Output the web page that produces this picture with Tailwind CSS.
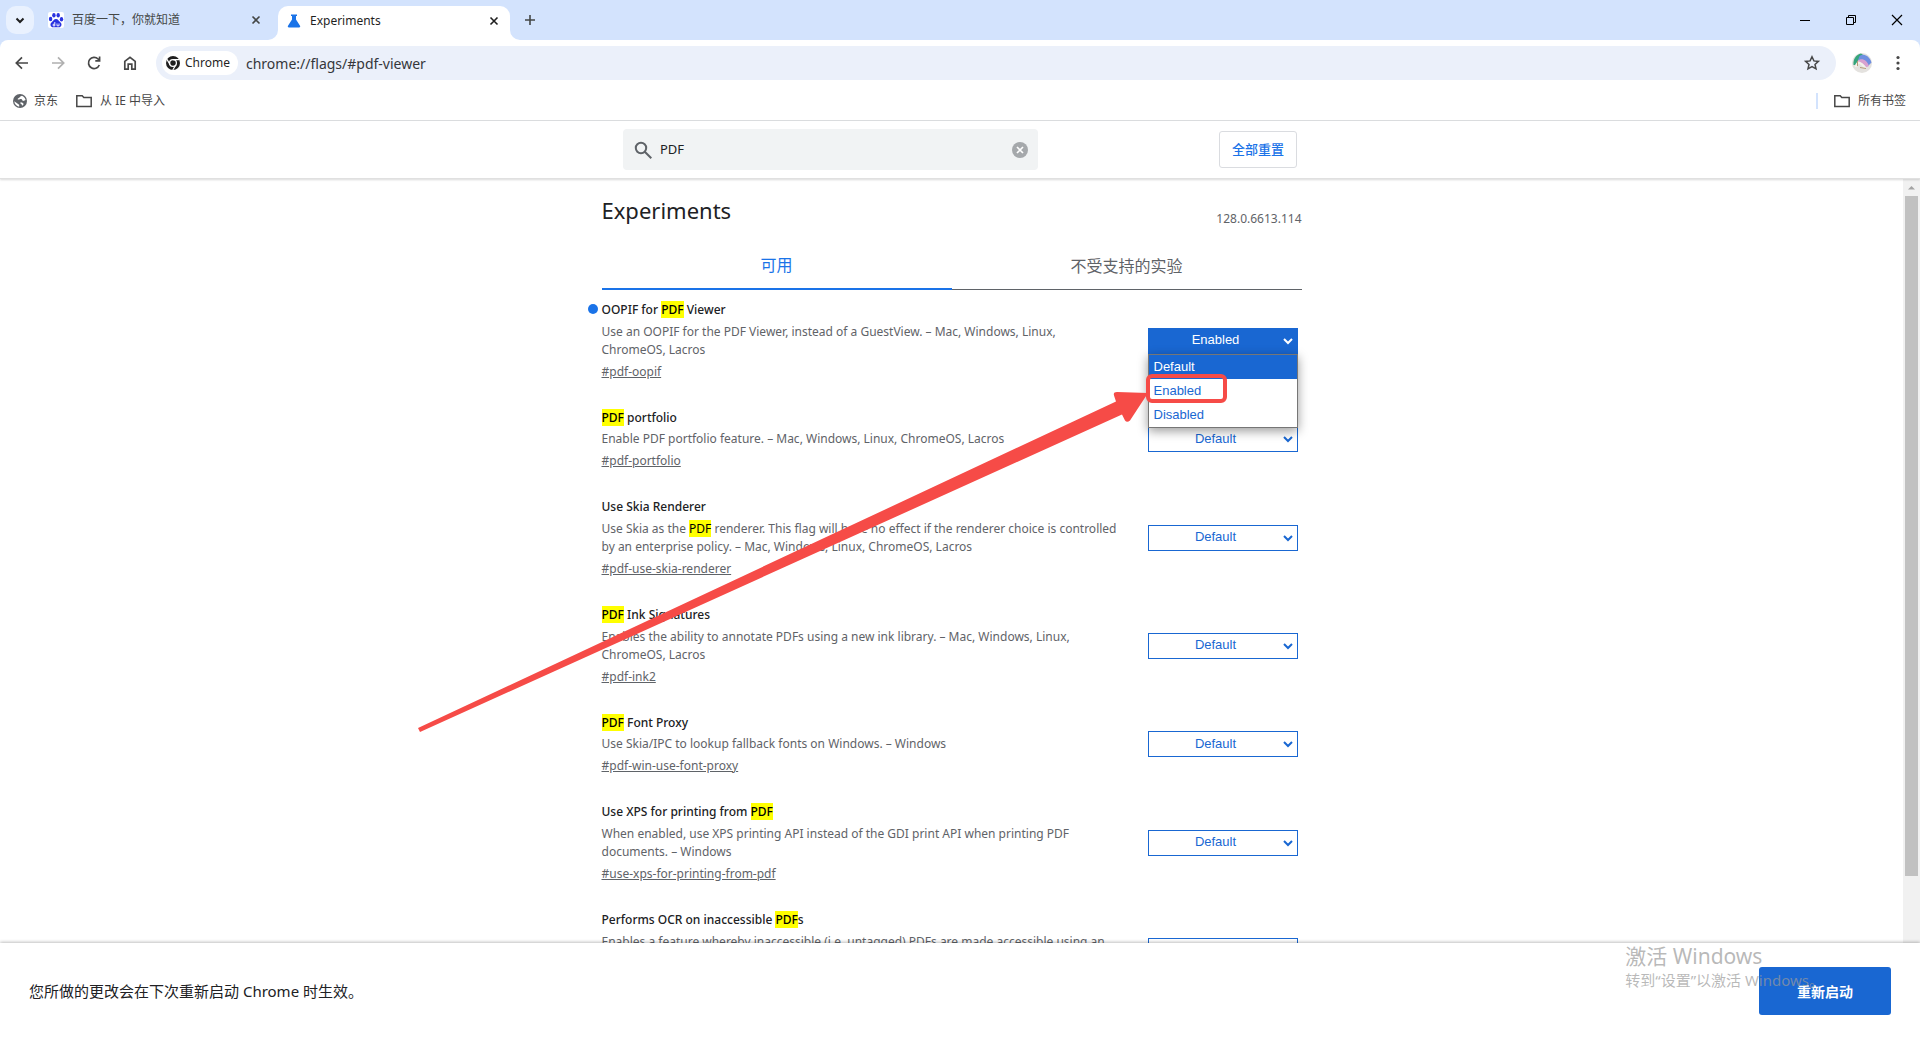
<!DOCTYPE html>
<html lang="zh-CN">
<head>
<meta charset="utf-8">
<title>Experiments</title>
<script src="https://cdn.jsdelivr.net/npm/@tailwindcss/browser@4"></script>
</head>
<body class="flex h-screen flex-col overflow-hidden bg-white font-['Noto_Sans','Noto_Sans_CJK_SC',sans-serif] text-[12px] text-[#202124]">
<!-- tab strip -->
<header class="shrink-0 border-b border-[#dcdee0] bg-[#d3e3fd]">
  <div class="flex h-10 items-center">
    <button aria-label="搜索标签页" class="ml-1.5 flex size-7 items-center justify-center rounded-[10px] bg-[#e9f1fe]">
      <svg class="size-4" viewBox="0 0 16 16" fill="none" stroke="#1f1f1f" stroke-width="2"><path d="M4.500 6.500 8 10l3.500-3.500"/></svg>
    </button>
    <div class="ml-3.5 flex w-[230px] items-center">
      <svg class="size-4 shrink-0" viewBox="0 0 16 16"><rect width="16" height="16" rx="2" fill="#fff"/><g fill="#2932e1"><ellipse cx="2.600" cy="7" rx="1.700" ry="2.200"/><ellipse cx="5.900" cy="3.200" rx="1.700" ry="2.300"/><ellipse cx="10.200" cy="3.200" rx="1.700" ry="2.300"/><ellipse cx="13.500" cy="7.200" rx="1.700" ry="2.200"/><path d="M8 7c2.200 0 2.800 2 4.300 3.300 2.400 2 .9 5.200-1.700 5-1.700-.1-3.500-.1-5.200 0-2.600.2-4.100-3-1.700-5C5.200 9 5.800 7 8 7Z"/></g><path d="M6.800 10v4M6.800 12.200H5.200v1.700h1.600M9 11.500v2.300h2v-2.300" fill="none" stroke="#fff" stroke-width=".9"/></svg>
      <span class="ml-2 flex-1 text-[#444746]">百度一下，你就知道</span>
      <button aria-label="关闭" class="mr-3.5 size-4"><svg viewBox="0 0 16 16" fill="none" stroke="#444746" stroke-width="1.600"><path d="m4.500 4.500 7 7m0-7-7 7"/></svg></button>
    </div>
    <div class="relative flex h-[34px] w-[232px] items-center self-end rounded-t-[10px] bg-white pb-1">
      <svg class="absolute bottom-0 -left-2.5 size-2.5" viewBox="0 0 10 10"><path d="M10 0v10H0A10 10 0 0 0 10 0Z" fill="#fff"/></svg>
      <svg class="absolute -right-2.5 bottom-0 size-2.5" viewBox="0 0 10 10"><path d="M0 0v10h10A10 10 0 0 1 0 0Z" fill="#fff"/></svg>
      <svg class="ml-2 size-4" viewBox="0 0 16 16"><path d="M5 1.500h6V3h-1v3.500l4 6.300c.6 1-.1 1.700-.9 1.700H2.900c-.8 0-1.500-.7-.9-1.700l4-6.300V3H5Z" fill="#1a73e8"/></svg>
      <span class="ml-2 flex-1 text-[#1f1f1f]">Experiments</span>
      <button aria-label="关闭" class="mr-2 size-4"><svg viewBox="0 0 16 16" fill="none" stroke="#1f1f1f" stroke-width="1.600"><path d="m4.500 4.500 7 7m0-7-7 7"/></svg></button>
    </div>
    <button aria-label="打开新的标签页" class="ml-3 size-4"><svg viewBox="0 0 16 16" fill="none" stroke="#444746" stroke-width="1.600"><path d="M8 3v10M3 8h10"/></svg></button>
    <div class="ml-auto flex items-center gap-[30px] pr-[15px]">
      <button aria-label="最小化" class="size-4"><svg viewBox="0 0 16 16" fill="none" stroke="#000"><path d="M3 8.500h10"/></svg></button>
      <button aria-label="向下还原" class="size-4"><svg viewBox="0 0 16 16" fill="none" stroke="#000"><path d="M3.500 5.500h7v7h-7zM5.500 5.500v-2h7v7h-2"/></svg></button>
      <button aria-label="关闭窗口" class="size-4"><svg viewBox="0 0 16 16" fill="none" stroke="#000" stroke-width="1.200"><path d="m3 3 10 10M13 3 3 13"/></svg></button>
    </div>
  </div>
  <div class="rounded-t-lg bg-white">
    <!-- toolbar -->
    <div class="flex h-[46px] items-center pl-3">
      <div class="flex gap-4 text-[#474747]">
        <button aria-label="返回" class="size-5"><svg viewBox="0 0 20 20" fill="none" stroke="currentColor" stroke-width="1.700"><path d="M16 10H4.500M10 4.300 4.300 10l5.700 5.700"/></svg></button>
        <button aria-label="前进" class="size-5 text-[#b0b0b0]"><svg viewBox="0 0 20 20" fill="none" stroke="currentColor" stroke-width="1.700"><path d="M4 10h11.500M10 4.300l5.700 5.700-5.700 5.700"/></svg></button>
        <button aria-label="重新加载" class="size-5"><svg viewBox="0 0 20 20" fill="none" stroke="currentColor" stroke-width="1.700"><path d="M15.300 12a5.600 5.600 0 1 1-1.200-6L15.500 7.500M15.600 3.500v4.300h-4.300"/></svg></button>
        <button aria-label="主页" class="size-5"><svg viewBox="0 0 20 20" fill="none" stroke="currentColor" stroke-width="1.700"><path d="M4.800 16.200V8.300L10 4.300l5.200 4v7.900h-3.400v-5H8.200v5Z"/></svg></button>
      </div>
      <div class="ml-4 flex h-[34px] flex-1 items-center rounded-full bg-[#ebf0fa] px-1.5">
        <button class="flex h-6 items-center gap-1 rounded-full bg-white pr-2 pl-[3px]">
          <svg class="size-4" viewBox="0 0 16 16"><circle cx="8" cy="8" r="7" fill="#1f1f1f"/><circle cx="8" cy="8" r="3.400" fill="#1f1f1f" stroke="#fff" stroke-width="1.300"/><path d="M8 4.600h6.200M5.100 9.700 2 4.400M10.900 9.700 7.800 15" stroke="#fff" stroke-width="1.200"/></svg>
          <span class="text-[#1f1f1f]">Chrome</span>
        </button>
        <input aria-label="地址" value="chrome://flags/#pdf-viewer" class="ml-2 min-w-0 flex-1 bg-transparent text-[14px] text-[#35373a] outline-none">
        <button aria-label="收藏" class="mr-2 size-5"><svg viewBox="0 0 20 20" fill="none" stroke="#474747" stroke-width="1.500"><path d="m10 3.800 1.900 4.100 4.500.5-3.400 3 1 4.400-4-2.300-4 2.300 1-4.400-3.400-3 4.500-.5Z"/></svg></button>
      </div>
      <button aria-label="个人资料" class="ml-4 size-5"><svg viewBox="0 0 20 20"><circle cx="10" cy="10" r="10" fill="#e4e2df"/><path d="M1.500 12C1 6 4 1.500 9 .5l3 2C8 3.500 6 7 4.500 12Z" fill="#35a57c"/><path d="M7 4.500C8 0 17 1 19.500 9.500L16 13C14 8 11 6 6 7.500Z" fill="#6f8fe0"/><path d="M5.500 8c4-4 9.500-1 11.500 5l-3 1.500C12 10 9 9 6 10Z" fill="#d9a2d0"/><path d="M4 14c0-3 2-5 4-4 2 .8 3.500 3 6 5.500" fill="none" stroke="#f4f1ea" stroke-width="2.200"/><path d="M5.500 8v5M8 14.500l6 1" stroke="#b59c79" fill="none"/></svg></button>
      <button aria-label="菜单" class="mr-3 ml-4 size-5"><svg viewBox="0 0 20 20" fill="#474747"><circle cx="10" cy="4.500" r="1.600"/><circle cx="10" cy="10" r="1.600"/><circle cx="10" cy="15.500" r="1.600"/></svg></button>
    </div>
    <!-- bookmarks bar -->
    <nav class="flex h-[34px] items-center pb-1 pl-3 text-[#474747]">
      <a href="#" class="flex items-center gap-1.5"><svg class="size-4" viewBox="0 0 16 16"><circle cx="8" cy="8" r="7" fill="#5f6368"/><path d="M7.200 13.700c-2.700-.4-4.800-2.700-4.900-5.400l3.400 2.500c.6.500 1.500.8 1.500 1.500ZM10 2.700c1.800.7 3.300 2.400 3.600 4.300-1 0-1.500 1.200-2.600.8-1.200-.4-.6-1.800-1.900-1.900-1.500 0-2 1-3.200.5-.7-.5.200-1.300.9-1.500C8 4.600 7.700 3.200 10 2.700ZM8.500 9.200c1.500-.2 2.500.8 3.300 1.900l-1.500 1.700c-.9-.6.300-1.500-1.800-2Z" fill="#fff"/></svg>京东</a>
      <a href="#" class="ml-[18px] flex items-center gap-2"><svg class="size-4" viewBox="0 0 16 16" fill="none" stroke="#474747" stroke-width="1.500"><path d="M.8 2.800h5.400l1.600 1.700h7.400v9H.8Z"/></svg>从 IE 中导入</a>
      <div class="mr-3.5 ml-auto flex items-center">
        <span class="h-4 w-0.5 bg-[#d3e3fd]"></span>
        <a href="#" class="ml-4 flex items-center gap-2"><svg class="size-4" viewBox="0 0 16 16" fill="none" stroke="#474747" stroke-width="1.500"><path d="M.8 2.800h5.400l1.600 1.700h7.400v9H.8Z"/></svg>所有书签</a>
      </div>
    </nav>
  </div>
</header>
<!-- search row -->
<div class="z-10 flex h-[58px] shrink-0 items-center justify-center border-b border-[#e0e0e0] bg-white shadow-[0_1px_2px_rgba(0,0,0,0.15)]">
  <div class="flex w-[674px] items-center justify-between">
    <div class="flex h-[41px] w-[415px] items-center rounded-sm bg-[#f1f3f4] px-2.5">
      <svg class="size-5" viewBox="0 0 20 20" fill="none" stroke="#5f6368" stroke-width="2"><circle cx="8" cy="8" r="5.200"/><path d="m11.800 11.800 6.500 6.500"/></svg>
      <input aria-label="搜索标记" value="PDF" class="ml-[7px] min-w-0 flex-1 bg-transparent text-[13px] outline-none">
      <button aria-label="清除搜索" class="size-4"><svg viewBox="0 0 16 16"><circle cx="8" cy="8" r="8" fill="#a5a8ab"/><path d="m5 5 6 6m0-6-6 6" stroke="#fff" stroke-width="1.700"/></svg></button>
    </div>
    <button class="h-[37px] w-[78px] rounded-[3px] border border-[#dadce0] text-[13px] font-medium text-[#1a73e8]">全部重置</button>
  </div>
</div>
<div class="flex min-h-0 flex-1">
  <main class="min-w-0 flex-1 overflow-hidden">
    <div class="relative mx-auto w-[700px]">
      <div class="flex h-[59px] items-end justify-between">
        <h1 class="pb-3 text-[22px] leading-8">Experiments</h1>
        <span class="pb-2.5 leading-[18px] text-[#5f6368]">128.0.6613.114</span>
      </div>
      <div class="flex h-[52px] text-[16px]">
        <button class="flex-1 border-b-2 border-[#1a73e8] pt-1 text-[#1a73e8]">可用</button>
        <button class="flex-1 border-b border-[#5f6368] pt-1 text-[#5f6368]">不受支持的实验</button>
      </div>
      <section class="flex flex-col gap-[27px] pt-2.5">
        <article class="relative flex items-center justify-between">
          <span class="absolute top-1 -left-3.5 size-2.5 rounded-full bg-[#1a73e8]"></span>
          <div class="w-[530px] text-[#5f6368]">
            <h2 class="text-[12px] leading-5 font-medium text-[#202124]">OOPIF for <mark class="bg-[#ff0]">PDF</mark> Viewer</h2>
            <p class="mt-[3px] leading-[18px]">Use an OOPIF for the PDF Viewer, instead of a GuestView. – Mac, Windows, Linux,<br>ChromeOS, Lacros</p>
            <a href="#" class="mt-1 block leading-[18px] underline">#pdf-oopif</a>
          </div>
          <div class="relative mr-1 w-[150px]">
            <select aria-label="OOPIF for PDF Viewer" class="block h-[26px] w-full appearance-none border border-[#1967d2] bg-[#1967d2] pr-3.5 pb-px text-center font-['Liberation_Sans',Arial,sans-serif] text-[13px] text-white"><option>Enabled</option></select>
            <svg class="pointer-events-none absolute top-[7px] right-1 size-3" viewBox="0 0 12 12" fill="none" stroke="#fff" stroke-width="2"><path d="m2 4 4 4 4-4"/></svg>
            <ul role="listbox" class="absolute top-[26px] left-0 z-10 w-[150px] border border-[#767676] bg-white font-['Liberation_Sans',Arial,sans-serif] text-[13px] leading-6 text-[#1967d2] shadow-[0_3px_10px_rgba(0,0,0,0.4)]">
              <li role="option" class="bg-[#1967d2] px-[5px] text-white">Default</li>
              <li role="option" class="px-[5px]">Enabled</li>
              <li role="option" class="px-[5px]">Disabled</li>
            </ul>
          </div>
        </article>
        <article class="flex items-center justify-between">
          <div class="w-[530px] text-[#5f6368]">
            <h2 class="text-[12px] leading-5 font-medium text-[#202124]"><mark class="bg-[#ff0]">PDF</mark> portfolio</h2>
            <p class="mt-0.5 leading-[18px]">Enable PDF portfolio feature. – Mac, Windows, Linux, ChromeOS, Lacros</p>
            <a href="#" class="mt-1 block leading-[18px] underline">#pdf-portfolio</a>
          </div>
          <div class="relative mr-1 w-[150px]">
            <select aria-label="PDF portfolio" class="block h-[26px] w-full appearance-none border border-[#1967d2] bg-white pr-3.5 pb-px text-center font-['Liberation_Sans',Arial,sans-serif] text-[13px] text-[#1967d2]"><option>Default</option></select>
            <svg class="pointer-events-none absolute top-[7px] right-1 size-3" viewBox="0 0 12 12" fill="none" stroke="#1967d2" stroke-width="2"><path d="m2 4 4 4 4-4"/></svg>
          </div>
        </article>
        <article class="flex items-center justify-between">
          <div class="w-[530px] text-[#5f6368]">
            <h2 class="text-[12px] leading-5 font-medium text-[#202124]">Use Skia Renderer</h2>
            <p class="mt-[3px] leading-[18px]">Use Skia as the <mark class="bg-[#ff0]">PDF</mark> renderer. This flag will have no effect if the renderer choice is controlled<br>by an enterprise policy. – Mac, Windows, Linux, ChromeOS, Lacros</p>
            <a href="#" class="mt-1 block leading-[18px] underline">#pdf-use-skia-renderer</a>
          </div>
          <div class="relative mr-1 w-[150px]">
            <select aria-label="Use Skia Renderer" class="block h-[26px] w-full appearance-none border border-[#1967d2] bg-white pr-3.5 pb-px text-center font-['Liberation_Sans',Arial,sans-serif] text-[13px] text-[#1967d2]"><option>Default</option></select>
            <svg class="pointer-events-none absolute top-[7px] right-1 size-3" viewBox="0 0 12 12" fill="none" stroke="#1967d2" stroke-width="2"><path d="m2 4 4 4 4-4"/></svg>
          </div>
        </article>
        <article class="flex items-center justify-between">
          <div class="w-[530px] text-[#5f6368]">
            <h2 class="text-[12px] leading-5 font-medium text-[#202124]"><mark class="bg-[#ff0]">PDF</mark> Ink Signatures</h2>
            <p class="mt-[3px] leading-[18px]">Enables the ability to annotate PDFs using a new ink library. – Mac, Windows, Linux,<br>ChromeOS, Lacros</p>
            <a href="#" class="mt-1 block leading-[18px] underline">#pdf-ink2</a>
          </div>
          <div class="relative mr-1 w-[150px]">
            <select aria-label="PDF Ink Signatures" class="block h-[26px] w-full appearance-none border border-[#1967d2] bg-white pr-3.5 pb-px text-center font-['Liberation_Sans',Arial,sans-serif] text-[13px] text-[#1967d2]"><option>Default</option></select>
            <svg class="pointer-events-none absolute top-[7px] right-1 size-3" viewBox="0 0 12 12" fill="none" stroke="#1967d2" stroke-width="2"><path d="m2 4 4 4 4-4"/></svg>
          </div>
        </article>
        <article class="flex items-center justify-between">
          <div class="w-[530px] text-[#5f6368]">
            <h2 class="text-[12px] leading-5 font-medium text-[#202124]"><mark class="bg-[#ff0]">PDF</mark> Font Proxy</h2>
            <p class="mt-0.5 leading-[18px]">Use Skia/IPC to lookup fallback fonts on Windows. – Windows</p>
            <a href="#" class="mt-1 block leading-[18px] underline">#pdf-win-use-font-proxy</a>
          </div>
          <div class="relative mr-1 w-[150px]">
            <select aria-label="PDF Font Proxy" class="block h-[26px] w-full appearance-none border border-[#1967d2] bg-white pr-3.5 pb-px text-center font-['Liberation_Sans',Arial,sans-serif] text-[13px] text-[#1967d2]"><option>Default</option></select>
            <svg class="pointer-events-none absolute top-[7px] right-1 size-3" viewBox="0 0 12 12" fill="none" stroke="#1967d2" stroke-width="2"><path d="m2 4 4 4 4-4"/></svg>
          </div>
        </article>
        <article class="flex items-center justify-between">
          <div class="w-[530px] text-[#5f6368]">
            <h2 class="text-[12px] leading-5 font-medium text-[#202124]">Use XPS for printing from <mark class="bg-[#ff0]">PDF</mark></h2>
            <p class="mt-[3px] leading-[18px]">When enabled, use XPS printing API instead of the GDI print API when printing PDF<br>documents. – Windows</p>
            <a href="#" class="mt-1 block leading-[18px] underline">#use-xps-for-printing-from-pdf</a>
          </div>
          <div class="relative mr-1 w-[150px]">
            <select aria-label="Use XPS for printing from PDF" class="block h-[26px] w-full appearance-none border border-[#1967d2] bg-white pr-3.5 pb-px text-center font-['Liberation_Sans',Arial,sans-serif] text-[13px] text-[#1967d2]"><option>Default</option></select>
            <svg class="pointer-events-none absolute top-[7px] right-1 size-3" viewBox="0 0 12 12" fill="none" stroke="#1967d2" stroke-width="2"><path d="m2 4 4 4 4-4"/></svg>
          </div>
        </article>
        <article class="flex items-center justify-between">
          <div class="w-[530px] text-[#5f6368]">
            <h2 class="text-[12px] leading-5 font-medium text-[#202124]">Performs OCR on inaccessible <mark class="bg-[#ff0]">PDF</mark>s</h2>
            <p class="mt-[3px] h-9 leading-[18px]">Enables a feature whereby inaccessible (i.e. untagged) PDFs are made accessible using an</p>
            <div class="mt-1 h-[18px]"></div>
          </div>
          <div class="relative mr-1 w-[150px]">
            <select aria-label="Performs OCR on inaccessible PDFs" class="block h-[26px] w-full appearance-none border border-[#1967d2] bg-white pr-3.5 pb-px text-center font-['Liberation_Sans',Arial,sans-serif] text-[13px] text-[#1967d2]"><option>Default</option></select>
          </div>
        </article>
      </section>
      <!-- annotation arrow and frame -->
      <svg class="pointer-events-none absolute top-[189px] -left-[185px] z-20 h-[370px] w-[820px]" viewBox="417 368 820 370">
        <path d="M418 728 1116 401.500 1114 395.500Q1113 392 1117 392L1148 393 1130 420.500Q1127 423 1125 420.500L1122 414.500 420 732Z" fill="#f64b47"/>
        <rect x="1148" y="376" width="77" height="25" rx="4" fill="none" stroke="#f64b47" stroke-width="4"/>
      </svg>
    </div>
  </main>
  <div class="flex w-[17px] flex-col items-center bg-[#f1f1f1]" aria-hidden="true">
    <svg class="h-[17px] w-[17px] shrink-0" viewBox="0 0 17 17"><path d="M5 10.500h7L8.500 7Z" fill="#a3a3a3"/></svg>
    <div class="h-[89%] w-[13px] bg-[#c1c1c1]"></div>
  </div>
</div>
<footer class="relative z-30 flex h-[97px] shrink-0 items-center justify-between bg-white px-[29px] pb-px shadow-[0_-1px_3px_rgba(0,0,0,0.25)]">
  <p class="text-[15px] text-[#202124]">您所做的更改会在下次重新启动 Chrome 时生效。</p>
  <button class="h-12 w-[132px] rounded-[3px] bg-[#1967d2] text-[14px] font-bold text-white">重新启动</button>
  <div class="pointer-events-none absolute top-0 right-[96px] text-[#9a9a9a]/70">
    <p class="text-[21px] leading-[26px]">激活 Windows</p>
    <p class="text-[15px] leading-[22px]">转到“设置”以激活 Windows。</p>
  </div>
</footer>
</body>
</html>
